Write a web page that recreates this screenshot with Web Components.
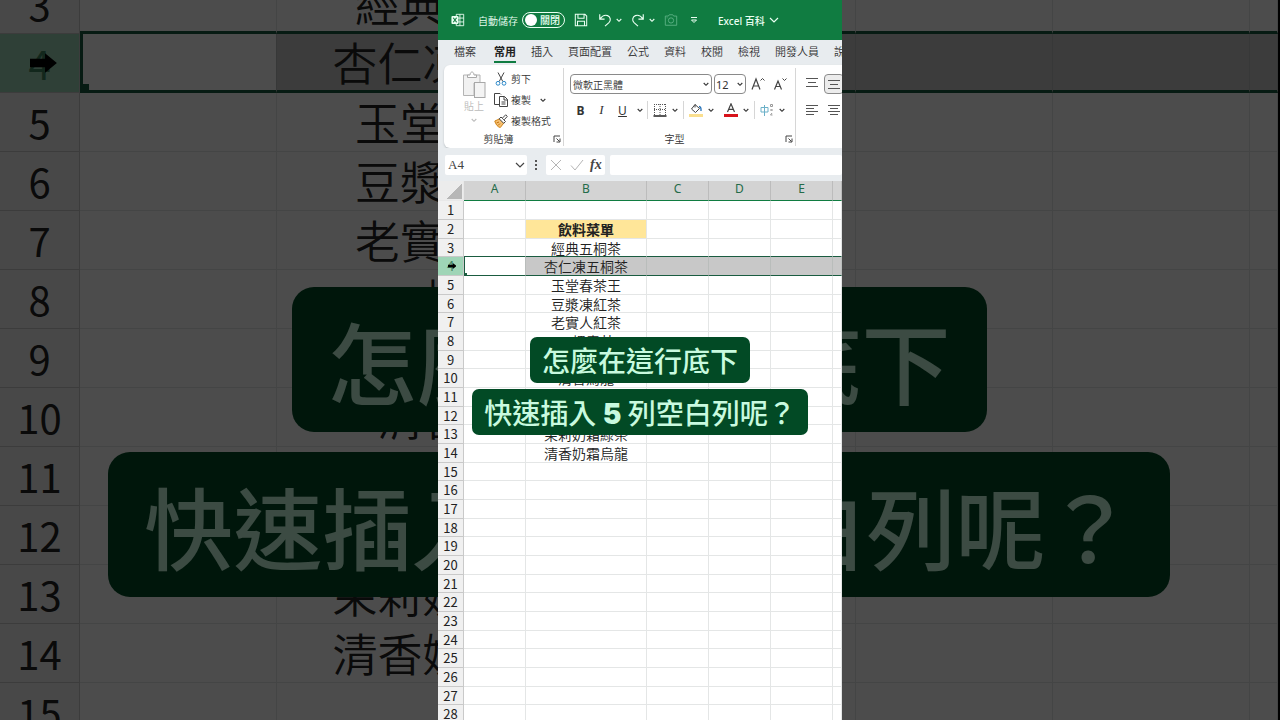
<!DOCTYPE html>
<html lang="zh-Hant">
<head>
<meta charset="utf-8">
<meta name="viewport" content="width=device-width, initial-scale=1">
<title>Excel 百科</title>
<style>
    :root {
        --x-font: "Noto Sans CJK TC", "Noto Sans", sans-serif;
        --x-green: #107c41;
        --x-selection: #1a5c40;
        --x-chrome: #e8ecef;
    }

    html, body {
        height: 100%;
        margin: 0;
    }

    body {
        position: relative;
        overflow: hidden;
        background: black;
        font-family: var(--x-font);
        font-weight: 350;
        color: #222;
    }

    .stage {
        position: relative;
        width: min(404px, 100%);
        height: 100%;
        margin: 0 auto;
        overflow: hidden;
        background: white;
    }
</style>
</head>
<body>

<x-backdrop aria-hidden="true">
    <x-sheet class="large" from="3" to="15" headless></x-sheet>
    <x-captions class="large">
        <x-caption>怎麼在這行底下</x-caption>
        <x-caption>快速插入 <b>5</b> 列空白列呢？</x-caption>
    </x-captions>
</x-backdrop>

<main class="stage">
    <x-titlebar>Excel 百科</x-titlebar>
    <x-tabs></x-tabs>
    <x-ribbon>
        <x-clipboard-group></x-clipboard-group>
        <x-font-group></x-font-group>
        <x-align-group></x-align-group>
    </x-ribbon>
    <x-formula-bar cell="A4"></x-formula-bar>
    <x-sheet from="1" to="28"></x-sheet>
    <x-captions>
        <x-caption>怎麼在這行底下</x-caption>
        <x-caption>快速插入 <b>5</b> 列空白列呢？</x-caption>
    </x-captions>
</main>

<script>
// @ts-check

/** Inner markup of every icon, drawn on its own viewBox */
const ICONS = {
    excel: ['0 0 16 16', `
        <path d="M6 1.5h8.5v13H6zM10.2 1.5v13M6 5.8h8.5M6 10.2h8.5" fill="none" stroke="currentColor"/>
        <rect x="0.5" y="3.5" width="8" height="9" rx="1" fill="#eafff2"/>
        <path d="M2.6 5.4l3.8 5.2M6.4 5.4l-3.8 5.2" stroke="#107c41" stroke-width="1.3"/>`],
    save: ['0 0 16 16', `
        <path d="M1.5 1.5h11l2 2v11h-13zM4.5 1.5v4.5h7v-4.5M4 14.5V9.5h8v5" fill="none" stroke="currentColor" stroke-width="1.2"/>`],
    undo: ['0 0 16 16', `
        <path d="M2 1.5v5.5h5.5M2.3 6.8C5 3 8 1.8 11 3c3.5 1.5 4 5.5 1.5 8L8 15" fill="none" stroke="currentColor" stroke-width="1.3"/>`],
    redo: ['0 0 16 16', `
        <path d="M14 1.5v5.5H8.5M13.7 6.8C11 3 8 1.8 5 3 1.5 4.5 1 8.5 3.5 11L8 15" fill="none" stroke="currentColor" stroke-width="1.3"/>`],
    camera: ['0 0 16 16', `
        <path d="M1.5 3.5h3.5l1-1.5h4l1 1.5h3.5v10.500h-13z" fill="none" stroke="currentColor"/>
        <circle cx="8" cy="8.5" r="3" fill="none" stroke="currentColor"/>
        <path d="M3 5.5h1" stroke="currentColor"/>`],
    more: ['0 0 8 8', `
        <path d="M1 1.5h6" stroke="currentColor"/>
        <path d="M1.5 4h5L4 6.5z" fill="none" stroke="currentColor"/>`],
    chevron: ['0 0 8 8', `
        <path d="M1.700 3l2.300 2.300L6.300 3" fill="none" stroke="currentColor" stroke-width="1.100"/>`],
    expand: ['0 0 10 10', `
        <path d="M1 3l4 4 4-4" fill="none" stroke="currentColor" stroke-width="1.200"/>`],
    paste: ['0 0 24 28', `
        <path d="M7 4H1.500v20.500H12V12h6V4h-5" fill="#f1f1f1" stroke="#b4b4b4"/>
        <path d="M5.500 6.500V4H8c0-4 4-4 4 0h2.500v2.500z" fill="#fff" stroke="#a8a8a8"/>
        <rect x="12.500" y="11.500" width="10.500" height="15" fill="#f4f4f4" stroke="#a8a8a8"/>`],
    cut: ['0 0 12 14', `
        <path d="M3 0.500l4.800 9M9 0.500L4.200 9.500" fill="none" stroke="#444"/>
        <circle cx="3" cy="11.300" r="1.900" fill="none" stroke="#2b88c9"/>
        <circle cx="9" cy="11.300" r="1.900" fill="none" stroke="#2b88c9"/>`],
    copy: ['0 0 14 14', `
        <path d="M5 11.500H0.500v-11h5.500l1 1" fill="none" stroke="#444"/>
        <path d="M5.500 3.500h5l3 3v7h-8z" fill="#fff" stroke="#444"/>
        <path d="M10 3.500v3.500h3.500M7.500 9h4M7.500 11h4" fill="none" stroke="#444"/>`],
    brush: ['0 0 14 14', `
        <path d="M0.800 7l5-2.200 4 4.200-3.500 4.500C3.500 13 1.500 10 0.800 7z" fill="#f7c173" stroke="#d08316"/>
        <path d="M2.500 9l2.500-1M4 11.500l2-2" stroke="#c0700b"/>
        <path d="M5.200 4.800l1.800-1.800 4.500 4.500-1.800 1.800z" fill="#fff" stroke="#444"/>
        <path d="M8.500 4l3.200-3.200 1.600 1.600L10.200 5.800" fill="#fff" stroke="#444"/>`],
    launcher: ['0 0 8 8', `
        <path d="M1 7V1h6M3.500 3.500l3 3M7 3.500V7H3.500" fill="none" stroke="#444"/>`],
    borders: ['0 0 14 14', `
        <path d="M1 1.500h12M1 6.500h12M1.500 1v11M7 1v11M12.500 1v11" fill="none" stroke="#555" stroke-dasharray="1 1"/>
        <path d="M0.500 13h13" stroke="#222" stroke-width="1.500"/>`],
    fill: ['0 0 14 14', `
        <path d="M6 1.500l4.500 4L6.500 9.500 2.500 6zM6 1.500v3" fill="#fff" stroke="#444"/>
        <path d="M10 3.500c1.800 0 2.200 1.800 2 4.500" fill="none" stroke="#2270b8" stroke-width="1.300"/>
        <rect x="0" y="11" width="14" height="3" fill="#fadf8f"/>`],
    fontColor: ['0 0 14 14', `
        <path d="M3.500 9L7 0.800 10.500 9M4.700 6.300h4.600" fill="none" stroke="#444" stroke-width="1.200"/>
        <rect x="0" y="11" width="14" height="3" fill="#d8131b"/>`],
    grow: ['0 0 14 14', `
        <path d="M1 12.500L5 2l4 10.500M2.400 9h5.200" fill="none" stroke="#444" stroke-width="1.200"/>
        <path d="M9.500 3.500l2-2 2 2" fill="none" stroke="#444"/>`],
    shrink: ['0 0 14 14', `
        <path d="M1.500 12.500L5 4l3.500 8.500M2.700 9.500h4.600" fill="none" stroke="#444" stroke-width="1.200"/>
        <path d="M9.500 1.500l2 2 2-2" fill="none" stroke="#444"/>`],
    phonetic: ['0 0 14 14', `
        <path d="M1 4.500h7v4.500H1zM4.500 2v11" fill="none" stroke="#6bb0c8"/>
        <path d="M10.500 1.500h2v2h-2zM10.500 6l2 2M12.500 6l-2 2M12 10l-1.500 2h2" fill="none" stroke="#999"/>`],
    alignTop: ['0 0 14 14', `<path d="M1 1.500h12M3 5.500h8M1 9.500h12" stroke="#555"/>`],
    alignMiddle: ['0 0 14 14', `<path d="M1 3.500h12M3 7.500h8M1 11.500h12" stroke="#555"/>`],
    alignLeft: ['0 0 14 14', `<path d="M1 2.500h12M1 5.500h8M1 8.500h12M1 11.500h8" stroke="#555"/>`],
    alignCenter: ['0 0 14 14', `<path d="M1 2.500h12M3 5.500h8M1 8.500h12M3 11.500h8" stroke="#555"/>`],
    cancel: ['0 0 14 14', `<path d="M2 2l10 10M12 2L2 12" stroke="#b5b5b5"/>`],
    enter: ['0 0 14 14', `<path d="M1 7.500l4 4.500 8-10" fill="none" stroke="#b5b5b5"/>`],
    dots: ['0 0 4 14', `<path d="M1 2h2v2H1zM1 6h2v2H1zM1 10h2v2H1z" fill="#555"/>`],
    arrow: ['0 0 25 18', `<path d="M0 5h14V0l11 9-11 9v-5H0z" fill="black"/>`],
}

/** Sheet content of column B */
const CELLS = {
    2: '飲料菜單',
    3: '經典五桐茶',
    4: '杏仁凍五桐茶',
    5: '玉堂春茶王',
    6: '豆漿凍紅茶',
    7: '老實人紅茶',
    8: '一棵青茶',
    10: '清香烏龍',
    13: '茉莉奶霜綠茶',
    14: '清香奶霜烏龍',
}

/** Shared look of the buttons inside every toolbar */
const BUTTON_STYLE = `
    button {
        display: flex;
        align-items: center;
        justify-content: center;
        margin: 0;
        padding: 0;
        border: 0;
        background: none;
        color: inherit;
        font: inherit;
        white-space: nowrap;
    }
`

class Icon extends HTMLElement {
    constructor() {
        super()
        const [box, body] = ICONS[this.getAttribute("name") ?? "chevron"]
        this.attachShadow({ mode: 'open' }).innerHTML = `
            <style>
                :host {
                    display: block;
                    flex: none;
                    width: 14px;
                    height: 14px;
                }

                :host([name="chevron"]), :host([name="more"]), :host([name="launcher"]) {
                    width: 8px;
                    height: 8px;
                }

                :host([name="expand"]) {
                    width: 10px;
                    height: 10px;
                }

                :host([name="paste"]) {
                    width: 24px;
                    height: 28px;
                }

                :host([name="dots"]) {
                    width: 4px;
                }

                :host([name="arrow"]) {
                    width: 100%;
                    height: 100%;
                }

                svg {
                    display: block;
                    width: 100%;
                    height: 100%;
                }
            </style>
            <svg viewBox="${box}" aria-hidden="true">${body}</svg>
        `
    }
}

class Titlebar extends HTMLElement {
    constructor() {
        super()
        this.attachShadow({ mode: 'open' }).innerHTML = `
            <style>
                ${BUTTON_STYLE}

                :host {
                    display: flex;
                    align-items: center;
                    height: 40px;
                    padding-left: 13px;
                    background: var(--x-green);
                    color: #eafff2;
                    font-size: 10px;
                    white-space: nowrap;
                }

                .autosave {
                    display: flex;
                    align-items: center;
                    gap: 4px;
                    margin: 0 9px 0 13px;
                }

                .switch {
                    box-sizing: border-box;
                    width: 43px;
                    height: 16px;
                    padding: 0 4px 0 2px;
                    justify-content: space-between;
                    border: 1px solid currentColor;
                    border-radius: 8px;
                    font-weight: 500;
                    line-height: 14px;
                }

                .switch::before {
                    content: "";
                    width: 12px;
                    height: 12px;
                    border-radius: 50%;
                    background: white;
                }

                .history {
                    display: flex;
                    gap: 3px;
                    margin-left: 10px;
                }

                .history + .history {
                    margin-left: 8px;
                }

                .camera {
                    margin: 0 12px 0 8px;
                    color: #5fb487;
                }

                .title {
                    margin-left: 20px;
                    gap: 4px;
                    font-family: "Noto Sans", var(--x-font);
                    font-weight: 500;
                }
            </style>
            <x-icon name="excel"></x-icon>
            <div class="autosave">
                <span id="autosave">自動儲存</span>
                <button class="switch" role="switch" aria-checked="false" aria-labelledby="autosave">關閉</button>
            </div>
            <button aria-label="儲存"><x-icon name="save"></x-icon></button>
            <button class="history" aria-label="復原"><x-icon name="undo"></x-icon><x-icon name="chevron"></x-icon></button>
            <button class="history" aria-label="重做"><x-icon name="redo"></x-icon><x-icon name="chevron"></x-icon></button>
            <button class="camera" aria-label="相機"><x-icon name="camera"></x-icon></button>
            <button aria-label="自訂"><x-icon name="more"></x-icon></button>
            <button class="title"><slot></slot><x-icon name="expand"></x-icon></button>
        `
    }
}

class Tabs extends HTMLElement {
    tabs = ['檔案', '常用', '插入', '頁面配置', '公式', '資料', '校閱', '檢視', '開發人員', '說明']

    constructor() {
        super()
        this.attachShadow({ mode: 'open' }).innerHTML = `
            <style>
                ${BUTTON_STYLE}

                :host {
                    display: flex;
                    gap: 15px;
                    height: 25px;
                    padding-left: 16px;
                    overflow: hidden;
                    background: var(--x-chrome);
                    font-size: 11px;
                    color: #333;
                }

                button {
                    flex: none;
                    height: 23px;
                    box-sizing: border-box;
                    border-bottom: 2px solid transparent;
                }

                button:first-of-type {
                    margin-right: 3px;
                }

                button[aria-selected="true"] {
                    border-color: var(--x-green);
                    font-weight: 700;
                    color: #222;
                }
            </style>
            ${this.tabs.map((tab) => `
                <button role="tab" aria-selected="${tab == '常用'}">${tab}</button>
            `).join("")}
        `
        this.setAttribute("role", "tablist")
    }
}

class Ribbon extends HTMLElement {
    constructor() {
        super()
        this.attachShadow({ mode: 'open' }).innerHTML = `
            <style>
                :host {
                    display: block;
                    padding-left: 6px;
                    background: var(--x-chrome);
                    font-size: 10px;
                    color: #333;
                }

                .card {
                    display: flex;
                    height: 83px;
                    overflow: hidden;
                    border-radius: 6px 0 0 6px;
                    background: white;
                    box-shadow: 0 1px 2px #b9bec2;
                }
            </style>
            <div class="card"><slot></slot></div>
        `
    }
}

/** Base of the ribbon groups: content on top, label and launcher under it */
class Group extends HTMLElement {
    constructor() {
        super()
        this.attachShadow({ mode: 'open' }).innerHTML = `
            <style>
                ${BUTTON_STYLE}

                :host {
                    display: flex;
                    flex: none;
                    flex-direction: column;
                    box-sizing: border-box;
                    margin: 3px 0 2px;
                    border-right: 1px solid #d6d6d6;
                }

                .content {
                    flex: 1;
                }

                footer {
                    display: flex;
                    align-items: center;
                    height: 14px;
                    padding-right: 2px;
                    line-height: 14px;
                }

                footer span {
                    flex: 1;
                    text-align: center;
                }

                ${this.styles}
            </style>
            <div class="content">${this.content}</div>
            ${this.label ? `
                <footer>
                    <span>${this.label}</span>
                    <button aria-label="${this.label}設定"><x-icon name="launcher"></x-icon></button>
                </footer>
            ` : ""}
        `
    }

    get styles() { return "" }
    get content() { return "" }
    get label() { return "" }
}

class ClipboardGroup extends Group {
    get label() { return "剪貼簿" }

    get styles() {
        return `
            :host {
                width: 120px;
            }

            .content {
                display: flex;
                gap: 7px;
                padding-left: 17px;
            }

            .paste {
                flex-direction: column;
                justify-content: flex-start;
                align-self: flex-start;
                width: 26px;
                padding-top: 3px;
                line-height: 14px;
                color: #bbb;
            }

            .paste x-icon:last-child {
                margin-top: 3px;
            }

            .actions {
                display: flex;
                flex-direction: column;
                align-items: flex-start;
            }

            .actions button {
                gap: 3px;
                height: 21px;
            }

            .actions x-icon[name="chevron"] {
                margin-left: 5px;
            }
        `
    }

    get content() {
        return `
            <button class="paste"><x-icon name="paste"></x-icon>貼上<x-icon name="chevron"></x-icon></button>
            <div class="actions">
                <button><x-icon name="cut"></x-icon>剪下</button>
                <button><x-icon name="copy"></x-icon>複製<x-icon name="chevron"></x-icon></button>
                <button><x-icon name="brush"></x-icon>複製格式</button>
            </div>
        `
    }
}

class FontGroup extends Group {
    get label() { return "字型" }

    get styles() {
        return `
            :host {
                width: 232px;
            }

            .row {
                display: flex;
                align-items: center;
                height: 20px;
                padding: 6px 0 0 6px;
            }

            .row:first-child {
                gap: 2px;
            }

            label {
                position: relative;
                display: flex;
            }

            label x-icon {
                position: absolute;
                right: 2px;
                top: 6px;
                pointer-events: none;
            }

            select {
                appearance: none;
                box-sizing: border-box;
                width: 142px;
                height: 20px;
                margin: 0;
                padding: 0 2px;
                border: 1px solid #8a8a8a;
                border-radius: 4px;
                background: white;
                color: #333;
                font: inherit;
            }

            .size select {
                width: 32px;
                padding: 0 1px;
                font: 11px "Noto Sans", sans-serif;
            }

            .scale {
                width: 20px;
            }

            .letter {
                width: 21px;
                font: 12px "Noto Sans", sans-serif;
            }

            .letter b {
                font-weight: 700;
            }

            .letter i {
                font-family: "Liberation Serif", serif;
                font-size: 13px;
            }

            .menu {
                gap: 4px;
                width: 35px;
            }

            .small {
                width: 14px;
            }

            hr {
                width: 1px;
                height: 18px;
                margin: 0;
                border: 0;
                background: #d6d6d6;
            }
        `
    }

    get content() {
        return `
            <div class="row">
                <label><select aria-label="字型"><option>微軟正黑體</option></select><x-icon name="chevron"></x-icon></label>
                <label class="size"><select aria-label="大小"><option>12</option></select><x-icon name="chevron"></x-icon></label>
                <button class="scale" aria-label="放大字型"><x-icon name="grow"></x-icon></button>
                <button class="scale" aria-label="縮小字型"><x-icon name="shrink"></x-icon></button>
            </div>
            <div class="row">
                <button class="letter"><b>B</b></button>
                <button class="letter"><i>I</i></button>
                <button class="letter"><u>U</u></button>
                <button class="small" aria-label="底線樣式"><x-icon name="chevron"></x-icon></button>
                <hr>
                <button class="menu" aria-label="框線"><x-icon name="borders"></x-icon><x-icon name="chevron"></x-icon></button>
                <hr>
                <button class="menu" aria-label="填滿"><x-icon name="fill"></x-icon><x-icon name="chevron"></x-icon></button>
                <button class="menu" aria-label="字色"><x-icon name="fontColor"></x-icon><x-icon name="chevron"></x-icon></button>
                <hr>
                <button class="menu" aria-label="注音"><x-icon name="phonetic"></x-icon><x-icon name="chevron"></x-icon></button>
            </div>
        `
    }
}

class AlignGroup extends Group {
    get styles() {
        return `
            :host {
                width: 80px;
                border: 0;
            }

            .content {
                display: grid;
                grid-template-columns: 20px 20px;
                grid-auto-rows: 20px;
                align-content: start;
                gap: 6px 2px;
                padding: 6px 0 0 6px;
            }

            .active {
                border: 1px solid #8a8a8a;
                border-radius: 4px;
                background: #ececec;
            }
        `
    }

    get content() {
        return `
            <button aria-label="靠上對齊"><x-icon name="alignTop"></x-icon></button>
            <button class="active" aria-label="置中對齊"><x-icon name="alignMiddle"></x-icon></button>
            <button aria-label="靠左對齊"><x-icon name="alignLeft"></x-icon></button>
            <button aria-label="置中"><x-icon name="alignCenter"></x-icon></button>
        `
    }
}

class FormulaBar extends HTMLElement {
    constructor() {
        super()
        this.attachShadow({ mode: 'open' }).innerHTML = `
            <style>
                ${BUTTON_STYLE}

                :host {
                    display: flex;
                    align-items: center;
                    gap: 5px;
                    padding: 7px 0 6px 7px;
                    background: var(--x-chrome);
                    color: #444;
                }

                .box {
                    display: flex;
                    align-items: center;
                    height: 20px;
                    border-radius: 2px;
                    background: white;
                }

                .name {
                    width: 82px;
                }

                input {
                    flex: 1;
                    min-width: 0;
                    padding: 0 3px;
                    border: 0;
                    background: none;
                    color: inherit;
                    font: 13px "Liberation Serif", serif;
                }

                .name button {
                    width: 14px;
                }

                .actions {
                    justify-content: space-around;
                    width: 59px;
                }

                .actions button {
                    font: italic 700 14px "Liberation Serif", serif;
                }

                x-icon[name="dots"] {
                    margin: 0 3px 0 2px;
                }

                .formula {
                    flex: 1;
                }
            </style>
            <div class="box name">
                <input aria-label="名稱方塊" value="${this.getAttribute("cell")}">
                <button aria-label="名稱清單"><x-icon name="expand"></x-icon></button>
            </div>
            <x-icon name="dots"></x-icon>
            <div class="box actions">
                <button aria-label="取消"><x-icon name="cancel"></x-icon></button>
                <button aria-label="輸入"><x-icon name="enter"></x-icon></button>
                <button>fx</button>
            </div>
            <div class="box formula"><input aria-label="資料編輯列"></div>
        `
    }
}

class Sheet extends HTMLElement {
    constructor() {
        super()
        this.attachShadow({ mode: 'open' }).innerHTML = `
            <style>
                :host {
                    --row: 19px;
                    --row-third: 18px;
                    --head: 26px;
                    --col: 62px;
                    --col-b: 121px;
                    --line: 1px;
                    --handle: 3px;
                    --text: 14px;
                    --number: 13px;
                    display: block;
                    background: white;
                }

                :host(.large) {
                    --row: 59px;
                    --row-third: 59px;
                    --head: 80px;
                    --col: 197px;
                    --col-b: 382px;
                    --line: 3px;
                    --handle: 9px;
                    --text: 45px;
                    --number: 40px;
                }

                table {
                    width: 100%;
                    table-layout: fixed;
                    border-spacing: 0;
                }

                .head { width: var(--head); }
                .col { width: var(--col); }
                .col-b { width: var(--col-b); }

                th, td {
                    box-sizing: border-box;
                    height: var(--row);
                    padding: 0;
                    border: solid #e4e6e6;
                    border-width: 0 1px 1px 0;
                    font-size: var(--text);
                    font-weight: inherit;
                    line-height: calc(var(--row) - 3px);
                    text-align: center;
                    white-space: nowrap;
                }

                tr.third > * {
                    height: var(--row-third);
                }

                tbody th {
                    position: relative;
                    border-color: #c9c9c9;
                    background: #f0f0f0;
                    font-size: var(--number);
                    font-weight: 400;
                    color: #222;
                }

                thead th {
                    height: 20px;
                    padding-bottom: 3px;
                    border-color: #bcbcbc;
                    border-bottom-color: var(--x-green);
                    background: #d3d3d3;
                    font: 12px/16px "Noto Sans", sans-serif;
                    color: #246b49;
                }

                thead th:first-child {
                    border-color: #e8e8e8;
                    background: linear-gradient(135deg, #ececec 50%, #b7b7b7 50%) 8px 3px / 16px 15px no-repeat #ececec;
                }

                .menu-title {
                    background: #ffe699;
                    font-weight: 700;
                    color: #222;
                }

                tr.before > td {
                    border-bottom: var(--line) solid var(--x-selection);
                }

                tr.selected > td {
                    position: relative;
                    border-bottom: var(--line) solid var(--x-selection);
                    border-right-color: #b9bdbb;
                    background: #c8c8c8;
                }

                tr.selected > td:nth-child(2) {
                    border-left: var(--line) solid var(--x-selection);
                    background: white;
                }

                tr.selected > td:nth-child(2)::after {
                    content: "";
                    position: absolute;
                    left: calc(0px - var(--line));
                    bottom: calc(0px - var(--line));
                    width: var(--handle);
                    height: var(--handle);
                    background: var(--x-selection);
                }

                tr.selected > th {
                    background: #9fd5b7;
                    color: #3f8260;
                }

                .cursor {
                    position: absolute;
                    left: 38%;
                    right: 28%;
                    top: 0;
                    bottom: 0;
                }
            </style>
            <table>
                <colgroup>
                    <col class="head"><col class="col"><col class="col-b">
                    <col class="col"><col class="col"><col class="col"><col>
                </colgroup>
                ${this.hasAttribute("headless") ? "" : this.#head()}
                <tbody>${this.#rows()}</tbody>
            </table>
        `
    }

    #head() {
        return `
            <thead>
                <tr><th></th>${['A', 'B', 'C', 'D', 'E', ''].map((name) => `<th>${name}</th>`).join("")}</tr>
            </thead>
        `
    }

    #rows() {
        const from = Number(this.getAttribute("from"))
        const to = Number(this.getAttribute("to"))
        let rows = ""

        for (let n = from; n <= to; n++) {
            const names = [n % 3 == 0 ? "third" : "", n == 3 ? "before" : "", n == 4 ? "selected" : ""]
            rows += `
                <tr class="${names.join(" ").trim()}">
                    <th>${n}${n == 4 ? `<span class="cursor"><x-icon name="arrow"></x-icon></span>` : ""}</th>
                    <td></td>
                    <td class="${n == 2 ? "menu-title" : ""}">${CELLS[n] ?? ""}</td>
                    <td></td><td></td><td></td><td></td>
                </tr>
            `
        }
        return rows
    }
}

class Captions extends HTMLElement {
    constructor() {
        super()
        this.attachShadow({ mode: 'open' }).innerHTML = `
            <style>
                :host {
                    --caption-size: 28px;
                    --caption-height: 46px;
                    --caption-padding: 12px;
                    --caption-radius: 7px;
                    position: absolute;
                    top: 337px;
                    left: 0;
                    right: 0;
                    display: flex;
                    flex-direction: column;
                    align-items: center;
                    gap: 6px;
                }

                :host(.large) {
                    --caption-size: 89px;
                    --caption-height: 145px;
                    --caption-padding: 36px;
                    --caption-radius: 22px;
                    top: 287px;
                    gap: 20px;
                }
            </style>
            <slot></slot>
        `
    }
}

class Caption extends HTMLElement {
    constructor() {
        super()
        this.attachShadow({ mode: 'open' }).innerHTML = `
            <style>
                :host {
                    padding: 0 var(--caption-padding);
                    border-radius: var(--caption-radius);
                    background: #024a25;
                    color: #c8fadf;
                    font-size: var(--caption-size);
                    font-weight: 500;
                    line-height: var(--caption-height);
                    white-space: nowrap;
                }

                ::slotted(b) {
                    font-family: Inter, sans-serif;
                    font-weight: 900;
                    line-height: 1;
                }
            </style>
            <slot></slot>
        `
    }
}

class Backdrop extends HTMLElement {
    constructor() {
        super()
        this.attachShadow({ mode: 'open' }).innerHTML = `
            <style>
                :host {
                    position: absolute;
                    inset: 0 2px 0 0;
                    overflow: hidden;
                }

                :host::after {
                    content: "";
                    position: absolute;
                    inset: 0;
                    background: rgb(0 0 0 / 70%);
                }

                /* the sheet is scrolled part of the way through row 3 */
                ::slotted(x-sheet) {
                    margin-top: -25px;
                }
            </style>
            <slot></slot>
        `
    }
}

customElements.define('x-icon', Icon)
customElements.define('x-titlebar', Titlebar)
customElements.define('x-tabs', Tabs)
customElements.define('x-ribbon', Ribbon)
customElements.define('x-clipboard-group', ClipboardGroup)
customElements.define('x-font-group', FontGroup)
customElements.define('x-align-group', AlignGroup)
customElements.define('x-formula-bar', FormulaBar)
customElements.define('x-sheet', Sheet)
customElements.define('x-captions', Captions)
customElements.define('x-caption', Caption)
customElements.define('x-backdrop', Backdrop)
</script>
</body>
</html>
